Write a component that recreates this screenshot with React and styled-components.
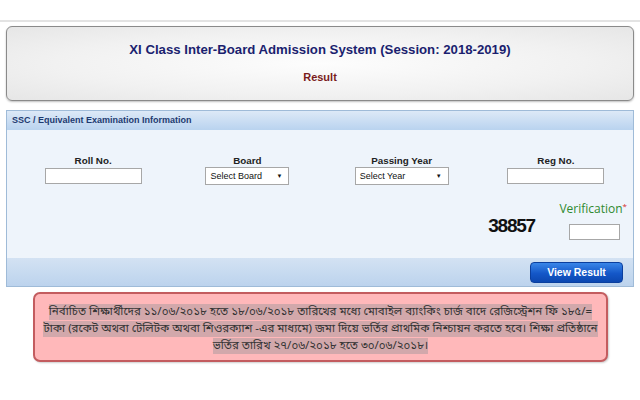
import React from 'react';
import styled, { createGlobalStyle } from 'styled-components';

const Global = createGlobalStyle`
  html, body { margin: 0; padding: 0; background: #fff; }
  body {
    width: 640px; height: 400px; overflow: hidden;
    font-family: "Liberation Sans", Arial, sans-serif;
  }
`;

const TopBar = styled.div`
  height: 20px;
  border-bottom: 2px solid #e3e3e3;
`;

const Content = styled.div`
  padding: 4px 6px 0 6px;
`;

const HeaderBox = styled.div`
  height: 75px;
  box-sizing: border-box;
  border: 1px solid #8a8a8a;
  border-radius: 6px;
  background: radial-gradient(ellipse at center, #fdfdfd 0%, #f1f1f1 60%, #e6e6e6 100%);
  box-shadow: 0 1px 2px rgba(0, 0, 0, 0.25);
  display: flex;
  flex-direction: column;
  align-items: center;
  padding-top: 15px;
`;

const Title = styled.div`
  font-size: 13.2px;
  font-weight: bold;
  line-height: 16px;
  color: #1b1f6f;
`;

const SubTitle = styled.div`
  margin-top: 12px;
  font-size: 11px;
  font-weight: bold;
  line-height: 14px;
  color: #7a1c1c;
`;

const Panel = styled.div`
  margin-top: 9px;
  width: 628px;
  box-sizing: border-box;
  border: 1px solid #9fbbd8;
`;

const PanelHead = styled.div`
  height: 19px;
  line-height: 19px;
  padding-left: 5px;
  font-size: 9px;
  font-weight: bold;
  color: #1d3a70;
  background: linear-gradient(to bottom, #dde9f7 0%, #b9d3ef 100%);
`;

const PanelBody = styled.div`
  background: #eef4fb;
  padding: 25px 0 18px 0;
`;

const Fields = styled.div`
  display: grid;
  grid-template-columns: repeat(4, 1fr);
  padding-left: 9px;
`;

const Field = styled.div`
  display: flex;
  flex-direction: column;
  align-items: center;
  gap: 1px;
`;

const Label = styled.div`
  font-size: 9.8px;
  font-weight: bold;
  line-height: 12px;
  color: #222;
`;

const TextBox = styled.div`
  width: ${p => p.$w || 97}px;
  height: 16px;
  box-sizing: border-box;
  border: 1px solid #a7a7a7;
  background: #fff;
`;

const SelectBox = styled.div`
  width: ${p => p.$w}px;
  height: 18px;
  box-sizing: border-box;
  border: 1px solid #a7a7a7;
  background: #fff;
  display: flex;
  align-items: center;
  justify-content: space-between;
  padding: 0 6px 0 4px;
  font-size: 9px;
  color: #111;
  margin-top: -1px;
`;

const Arrow = styled.span`
  font-size: 6px;
  color: #111;
`;

const VerifyBlock = styled.div`
  margin-top: 17px;
  display: flex;
  flex-direction: column;
  align-items: flex-end;
  padding-right: 13px;
`;

const VerifyLabel = styled.div`
  margin-right: -7px;
  font-family: "Open Sans", "DejaVu Sans", sans-serif;
  font-size: 12px;
  line-height: 14px;
  color: #2f8a2f;
`;

const Star = styled.sup`
  color: #d42a2a;
  font-size: 8px;
  vertical-align: top;
  line-height: 8px;
`;

const CaptchaRow = styled.div`
  display: flex;
  align-items: flex-start;
  gap: 34px;
`;

const Captcha = styled.div`
  font-size: 19px;
  font-weight: bold;
  letter-spacing: -1.2px;
  line-height: 18px;
  color: #111;
  margin-top: 1px;
`;

const CaptchaInput = styled(TextBox)`
  margin-top: 8px;
`;

const PanelFoot = styled.div`
  height: 28px;
  display: flex;
  align-items: center;
  justify-content: flex-end;
  padding-right: 10px;
  background: linear-gradient(to bottom, #d3e2f3 0%, #bcd3ed 100%);
`;

const Button = styled.div`
  width: 93px;
  height: 21px;
  box-sizing: border-box;
  border: 1px solid #0b3f9e;
  border-radius: 4px;
  background: linear-gradient(to bottom, #3a86e8 0%, #1457c8 55%, #0c47b0 100%);
  color: #fff;
  font-size: 10.5px;
  font-weight: bold;
  display: flex;
  align-items: center;
  justify-content: center;
`;

const Notice = styled.div`
  margin: 5px 0 0 27px;
  width: 575px;
  height: 70px;
  box-sizing: border-box;
  border: 2px solid #c35c5f;
  border-radius: 7px;
  background: #ffb8ba;
  box-shadow: 1px 1px 2px rgba(0, 0, 0, 0.2);
  padding-top: 10px;
  text-align: center;
  font-family: "Noto Sans Bengali", "Noto Serif Bengali", "Lohit Bengali", "FreeSerif", sans-serif;
  font-size: 11.5px;
  line-height: 17px;
  color: #333;
`;

const Mark = styled.span`
  background: #d2a8ab;
`;

export default function App() {
  return (
    <>
      <Global />
      <TopBar />
      <Content>
        <HeaderBox>
          <Title>XI Class Inter-Board Admission System (Session: 2018-2019)</Title>
          <SubTitle>Result</SubTitle>
        </HeaderBox>
        <Panel>
          <PanelHead>SSC / Equivalent Examination Information</PanelHead>
          <PanelBody>
            <Fields>
              <Field>
                <Label>Roll No.</Label>
                <TextBox />
              </Field>
              <Field>
                <Label>Board</Label>
                <SelectBox $w={84}>Select Board<Arrow>▼</Arrow></SelectBox>
              </Field>
              <Field>
                <Label>Passing Year</Label>
                <SelectBox $w={94}>Select Year<Arrow>▼</Arrow></SelectBox>
              </Field>
              <Field>
                <Label>Reg No.</Label>
                <TextBox />
              </Field>
            </Fields>
            <VerifyBlock>
              <VerifyLabel>Verification<Star>*</Star></VerifyLabel>
              <CaptchaRow>
                <Captcha>38857</Captcha>
                <CaptchaInput $w={51} />
              </CaptchaRow>
            </VerifyBlock>
          </PanelBody>
          <PanelFoot>
            <Button>View Result</Button>
          </PanelFoot>
        </Panel>
        <Notice>
          <Mark>নির্বাচিত শিক্ষার্থীদের ১১/০৬/২০১৮ হতে ১৮/০৬/২০১৮ তারিখের মধ্যে মোবাইল ব্যাংকিং চার্জ বাদে রেজিস্ট্রেশন ফি ১৮৫/=</Mark>
          <br />
          <Mark>টাকা (রকেট অথবা টেলিটক অথবা শিওরক্যাশ -এর মাধ্যমে) জমা দিয়ে ভর্তির প্রাথমিক নিশ্চায়ন করতে হবে। শিক্ষা প্রতিষ্ঠানে</Mark>
          <br />
          <Mark>ভর্তির তারিখ ২৭/০৬/২০১৮ হতে ৩০/০৬/২০১৮।</Mark>
        </Notice>
      </Content>
    </>
  );
}
